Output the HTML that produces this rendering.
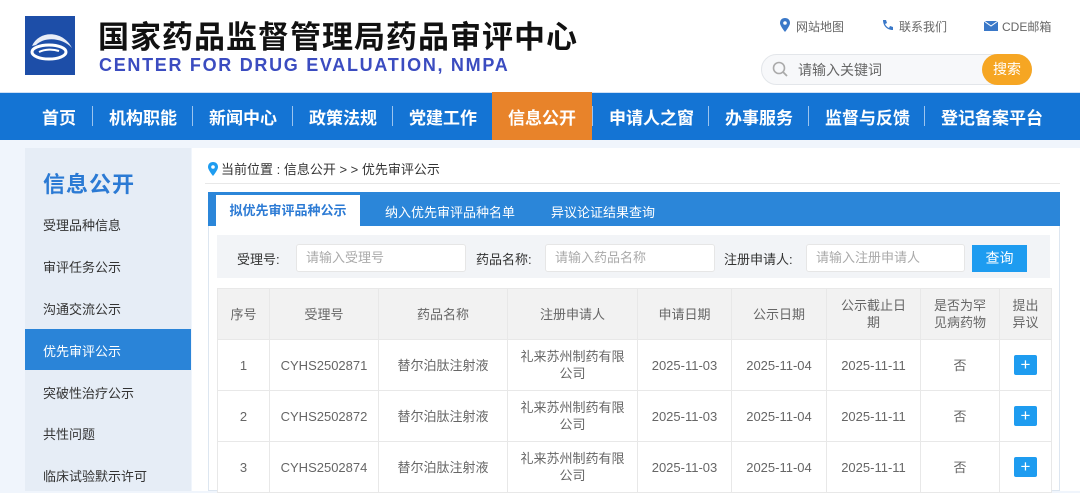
<!DOCTYPE html>
<html><head><meta charset="utf-8">
<style>
*{margin:0;padding:0;box-sizing:border-box}
body{width:1080px;height:491px;overflow:hidden;background:#f0f5fc;font-family:"Liberation Sans","Noto Sans CJK SC",sans-serif;position:relative}
.a{position:absolute;white-space:nowrap}
.hdr{left:0;top:0;width:1080px;height:92px;background:#fff}
.nav{left:0;top:92px;width:1080px;height:48px;background:#1474d4;border-top:1px solid #cfe0f5}
.nv{top:104px;color:#fff;font-size:17px;font-weight:bold}
.sep{top:106px;width:1px;height:20px;background:#9cc4ee}
.side{left:25px;top:148px;width:166px;height:343px;background:#e6edf6}
.si{left:43px;font-size:13px;color:#333}
.main{left:192px;top:148px;width:888px;height:343px;background:#fff}
table{border-collapse:collapse;position:absolute;left:217px;top:288px;width:834px;font-size:13px;color:#666;table-layout:fixed}
td,th{border:1px solid #e8e8e8;text-align:center;font-weight:normal;line-height:17px}
th{background:#f2f2f2;height:51px;color:#666}
td{height:51px;background:#fff}
.pl{display:inline-block;width:23px;height:20px;background:#1e9cf0;color:#fff;font-size:17px;line-height:19px;border-radius:2px}
.inp{height:28px;background:#fff;border:1px solid #e6e6e6;border-radius:3px;font-size:13px;color:#aaa;padding-left:9px;line-height:26px}
.lb{font-size:13px;color:#333;top:249px}
</style></head><body>
<div class="a hdr"></div>
<svg class="a" style="left:25px;top:16px" width="50" height="59" viewBox="0 0 50 59">
<rect width="50" height="59" fill="#1d4ea8"/>
<path d="M7 30 C14 14 38 14 47 32 C38 22 20 20 11 29z" fill="#fff" opacity=".9"/>
<ellipse cx="24" cy="36" rx="17" ry="7" fill="none" stroke="#fff" stroke-width="3"/>
<path d="M14 36 C20 33 28 33 34 35" stroke="#fff" stroke-width="2" fill="none"/>
</svg>
<div class="a" style="left:98px;top:12px;font-size:31px;font-weight:bold;color:#111;letter-spacing:1px">国家药品监督管理局药品审评中心</div>
<div class="a" style="left:99px;top:55px;font-size:18px;font-weight:bold;color:#3b4cc0;letter-spacing:1.7px">CENTER FOR DRUG EVALUATION, NMPA</div>
<svg class="a" style="left:780px;top:18px" width="10" height="14" viewBox="0 0 10 14"><path d="M5 0C2 0 0 2 0 5c0 3 5 9 5 9s5-6 5-9C10 2 8 0 5 0z" fill="#3a78c8"/><circle cx="5" cy="5" r="1.8" fill="#fff"/></svg>
<div class="a" style="left:796px;top:18px;font-size:12px;color:#666">网站地图</div>
<svg class="a" style="left:881px;top:19px" width="14" height="13" viewBox="0 0 14 13"><path d="M2 1l3 0 1 3-2 1c1 2 2 3 4 4l1-2 3 1 0 3c-6 0-10-4-10-10z" fill="#3a78c8"/></svg>
<div class="a" style="left:899px;top:18px;font-size:12px;color:#666">联系我们</div>
<svg class="a" style="left:984px;top:21px" width="14" height="10" viewBox="0 0 14 10"><rect width="14" height="10" fill="#3a78c8"/><path d="M0 0l7 5 7-5" stroke="#fff" fill="none"/></svg>
<div class="a" style="left:1002px;top:18px;font-size:12px;color:#666">CDE邮箱</div>
<div class="a" style="left:761px;top:54px;width:271px;height:31px;border:1px solid #e3e6ea;background:#f7f8fa;border-radius:16px"></div>
<svg class="a" style="left:772px;top:61px" width="17" height="17" viewBox="0 0 17 17"><circle cx="7" cy="7" r="5.5" stroke="#aaa" stroke-width="1.6" fill="none"/><path d="M11 11l4 4" stroke="#aaa" stroke-width="1.8"/></svg>
<div class="a" style="left:798px;top:60px;font-size:14px;color:#666">请输入关键词</div>
<div class="a" style="left:982px;top:54px;width:50px;height:31px;background:#f6a623;border-radius:16px;color:#fff;font-size:14px;text-align:center;line-height:31px">搜索</div>
<div class="a nav"></div>
<div class="a" style="left:492px;top:92px;width:100px;height:48px;background:#e8832a"></div>
<div class="a nv" style="left:42px">首页</div>
<div class="a nv" style="left:109px">机构职能</div>
<div class="a nv" style="left:209px">新闻中心</div>
<div class="a nv" style="left:309px">政策法规</div>
<div class="a nv" style="left:409px">党建工作</div>
<div class="a nv" style="left:508px">信息公开</div>
<div class="a nv" style="left:609px">申请人之窗</div>
<div class="a nv" style="left:725px">办事服务</div>
<div class="a nv" style="left:825px">监督与反馈</div>
<div class="a nv" style="left:941px">登记备案平台</div>
<div class="a sep" style="left:92px"></div><div class="a sep" style="left:192px"></div><div class="a sep" style="left:292px"></div><div class="a sep" style="left:392px"></div><div class="a sep" style="left:592px"></div><div class="a sep" style="left:708px"></div><div class="a sep" style="left:808px"></div><div class="a sep" style="left:924px"></div>
<div class="a side"></div>
<div class="a" style="left:43px;top:167px;font-size:22px;font-weight:bold;color:#2b7ad4;letter-spacing:1px">信息公开</div>
<div class="a si" style="top:215px">受理品种信息</div>
<div class="a si" style="top:257px">审评任务公示</div>
<div class="a si" style="top:299px">沟通交流公示</div>
<div class="a" style="left:25px;top:329px;width:166px;height:41px;background:#2a84d8"></div>
<div class="a si" style="top:341px;color:#fff">优先审评公示</div>
<div class="a si" style="top:383px">突破性治疗公示</div>
<div class="a si" style="top:424px">共性问题</div>
<div class="a si" style="top:466px">临床试验默示许可</div>
<div class="a main"></div>
<svg class="a" style="left:208px;top:162px" width="10" height="14" viewBox="0 0 10 14"><path d="M5 0C2 0 0 2 0 5c0 3 5 9 5 9s5-6 5-9C10 2 8 0 5 0z" fill="#1e9cf0"/><circle cx="5" cy="5" r="1.8" fill="#fff"/></svg>
<div class="a" style="left:221px;top:159px;font-size:13px;color:#333">当前位置 : 信息公开 &gt; &gt; 优先审评公示</div>
<div class="a" style="left:205px;top:183px;width:855px;height:1px;background:#e8e8e8"></div>
<div class="a" style="left:208px;top:192px;width:852px;height:299px;border:1px solid #dde6f0"></div>
<div class="a" style="left:208px;top:192px;width:852px;height:34px;background:#2b86d9"></div>
<div class="a" style="left:216px;top:195px;width:144px;height:31px;background:#fff;color:#2b7ad4;font-size:13px;font-weight:bold;text-align:center;line-height:31px">拟优先审评品种公示</div>
<div class="a" style="left:385px;top:202px;font-size:13px;color:#fff">纳入优先审评品种名单</div>
<div class="a" style="left:551px;top:202px;font-size:13px;color:#fff">异议论证结果查询</div>
<div class="a" style="left:217px;top:235px;width:833px;height:43px;background:#f2f4f7"></div>
<div class="a lb" style="left:237px">受理号:</div>
<div class="a inp" style="left:296px;top:244px;width:170px">请输入受理号</div>
<div class="a lb" style="left:476px">药品名称:</div>
<div class="a inp" style="left:545px;top:244px;width:170px">请输入药品名称</div>
<div class="a lb" style="left:724px">注册申请人:</div>
<div class="a inp" style="left:806px;top:244px;width:159px">请输入注册申请人</div>
<div class="a" style="left:972px;top:245px;width:55px;height:27px;background:#1e9cf0;color:#fff;font-size:14px;text-align:center;line-height:27px">查询</div>
<table>
<colgroup><col style="width:52px"><col style="width:109px"><col style="width:129px"><col style="width:130px"><col style="width:94px"><col style="width:95px"><col style="width:94px"><col style="width:79px"><col style="width:52px"></colgroup>
<tr><th>序号</th><th>受理号</th><th>药品名称</th><th>注册申请人</th><th>申请日期</th><th>公示日期</th><th>公示截止日<br>期</th><th>是否为罕<br>见病药物</th><th>提出<br>异议</th></tr>
<tr><td>1</td><td>CYHS2502871</td><td>替尔泊肽注射液</td><td>礼来苏州制药有限<br>公司</td><td>2025-11-03</td><td>2025-11-04</td><td>2025-11-11</td><td>否</td><td><span class="pl">+</span></td></tr>
<tr><td>2</td><td>CYHS2502872</td><td>替尔泊肽注射液</td><td>礼来苏州制药有限<br>公司</td><td>2025-11-03</td><td>2025-11-04</td><td>2025-11-11</td><td>否</td><td><span class="pl">+</span></td></tr>
<tr><td>3</td><td>CYHS2502874</td><td>替尔泊肽注射液</td><td>礼来苏州制药有限<br>公司</td><td>2025-11-03</td><td>2025-11-04</td><td>2025-11-11</td><td>否</td><td><span class="pl">+</span></td></tr>
</table>
</body></html>
